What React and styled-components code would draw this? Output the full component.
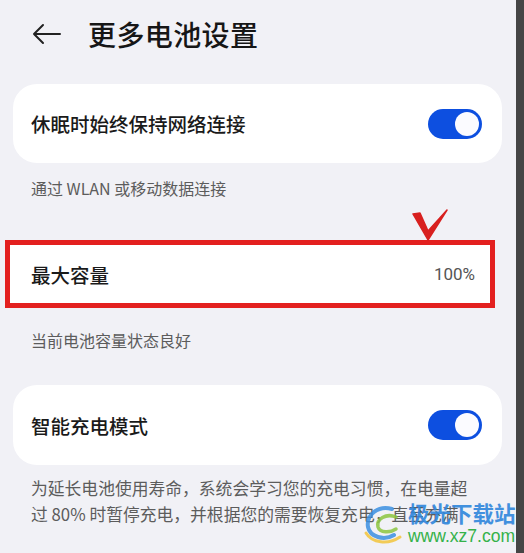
import styled, { createGlobalStyle } from "styled-components";

const GlobalStyle = createGlobalStyle`
  html, body {
    margin: 0;
    padding: 0;
    background: #f1f1f6;
  }
  body {
    font-family: "Noto Sans CJK SC", "Noto Sans", sans-serif;
    color: #1a1a1a;
  }
`;

const Frame = styled.div`
  position: relative;
  display: flex;
  width: 524px;
  height: 553px;
  overflow: hidden;
`;

const Screen = styled.div`
  width: 516px;
  display: flex;
  flex-direction: column;
  background: #f1f1f6;
`;

const SideStrip = styled.div`
  width: 8px;
  background: #454545;
`;

const Header = styled.div`
  height: 68px;
  display: flex;
  align-items: center;
  padding-left: 31px;
  gap: 27px;
`;

const Title = styled.h1`
  margin: 0;
  font-size: 28px;
  font-weight: 500;
  letter-spacing: 0.4px;
  color: #161616;
`;

const Card = styled.div`
  margin: ${(p) => p.$top}px 14px 0 13px;
  height: ${(p) => p.$height}px;
  background: #fff;
  border-radius: 24px;
  display: flex;
  align-items: center;
  justify-content: space-between;
  padding: 0 20px 0 18px;
`;

const MarkedRow = styled.div`
  position: relative;
  margin: 40px 0 0 5px;
  width: 490px;
  height: 68px;
  box-sizing: border-box;
  border: 5px solid #e3201f;
  background: #fff;
  display: flex;
  align-items: center;
  justify-content: space-between;
  padding: 0 15px 0 21px;
`;

const Label = styled.span`
  font-size: 19.5px;
  font-weight: 500;
  color: #1a1a1a;
`;

const Value = styled.span`
  font-family: "Roboto", "Noto Sans", sans-serif;
  font-size: 17px;
  color: #555;
`;

const Caption = styled.p`
  margin: ${(p) => p.$top}px 0 0 31px;
  font-size: 16px;
  line-height: 24px;
  color: #5c5c5c;
`;

const Description = styled.p`
  margin: 10px 40px 0 31px;
  font-size: 16.8px;
  line-height: 26px;
  color: #5c5c5c;
`;

const Toggle = styled.div`
  width: 54px;
  height: 30px;
  border-radius: 15px;
  background: #0d4fe0;
  display: flex;
  align-items: center;
  justify-content: flex-end;
  padding: 0 3px;
  box-sizing: border-box;
`;

const Knob = styled.div`
  width: 24px;
  height: 24px;
  border-radius: 50%;
  background: #fbfbff;
`;

const CheckMark = styled.svg`
  position: absolute;
  left: 394px;
  top: -38px;
`;

const Watermark = styled.div`
  position: absolute;
  left: 362px;
  top: 502px;
  display: flex;
  align-items: center;
  gap: 2px;
  white-space: nowrap;
  pointer-events: none;
`;

const MarkText = styled.div`
  display: flex;
  flex-direction: column;
  line-height: 1;
`;

const MarkName = styled.span`
  font-size: 21.5px;
  font-weight: 700;
  color: #2f86dc;
  opacity: 0.9;
`;

const MarkUrl = styled.span`
  margin-top: 4px;
  font-family: "Liberation Sans", Arial, sans-serif;
  font-size: 17.5px;
  color: #35b24a;
`;

function Switch() {
  return (
    <Toggle>
      <Knob />
    </Toggle>
  );
}

export default function App() {
  return (
    <>
      <GlobalStyle />
      <Frame>
        <Screen>
          <Header>
            <svg width="30" height="22" viewBox="0 0 30 22">
              <path
                d="M29 11H3M12 2L3 11l9 9"
                fill="none"
                stroke="#222"
                strokeWidth="2"
                strokeLinecap="round"
                strokeLinejoin="round"
              />
            </svg>
            <Title>更多电池设置</Title>
          </Header>

          <Card $top={16} $height={79}>
            <Label>休眠时始终保持网络连接</Label>
            <Switch />
          </Card>
          <Caption $top={13}>通过 WLAN 或移动数据连接</Caption>

          <MarkedRow>
            <Label>最大容量</Label>
            <Value>100%</Value>
            <CheckMark width="50" height="34" viewBox="0 0 50 34">
              <path
                d="M9 7 L16 6 L24 24 L43 3 L24 33 Z"
                fill="#d8201f"
                stroke="#d8201f"
                strokeWidth="1.5"
                strokeLinejoin="round"
              />
            </CheckMark>
          </MarkedRow>
          <Caption $top={20}>当前电池容量状态良好</Caption>

          <Card $top={33} $height={80}>
            <Label>智能充电模式</Label>
            <Switch />
          </Card>
          <Description>
            为延长电池使用寿命，系统会学习您的充电习惯，在电量超过 80% 时暂停充电，并根据您的需要恢复充电，直至充满
          </Description>
        </Screen>
        <SideStrip />

        <Watermark>
          <svg width="44" height="42" viewBox="0 0 44 42">
            <path
              d="M30 6 C16 2 4 12 6 24 C8 34 22 38 32 32"
              fill="none"
              stroke="#3b8fe0"
              strokeWidth="4"
              strokeLinecap="round"
              opacity="0.85"
            />
            <path
              d="M34 14 C24 10 14 16 16 24 C18 30 28 30 34 26"
              fill="none"
              stroke="#8cc63f"
              strokeWidth="3.5"
              strokeLinecap="round"
              opacity="0.85"
            />
            <path
              d="M4 30 C10 40 26 42 38 34"
              fill="none"
              stroke="#f2c230"
              strokeWidth="3"
              strokeLinecap="round"
              opacity="0.8"
            />
          </svg>
          <MarkText>
            <MarkName>极光下载站</MarkName>
            <MarkUrl>www.xz7.com</MarkUrl>
          </MarkText>
        </Watermark>
      </Frame>
    </>
  );
}
